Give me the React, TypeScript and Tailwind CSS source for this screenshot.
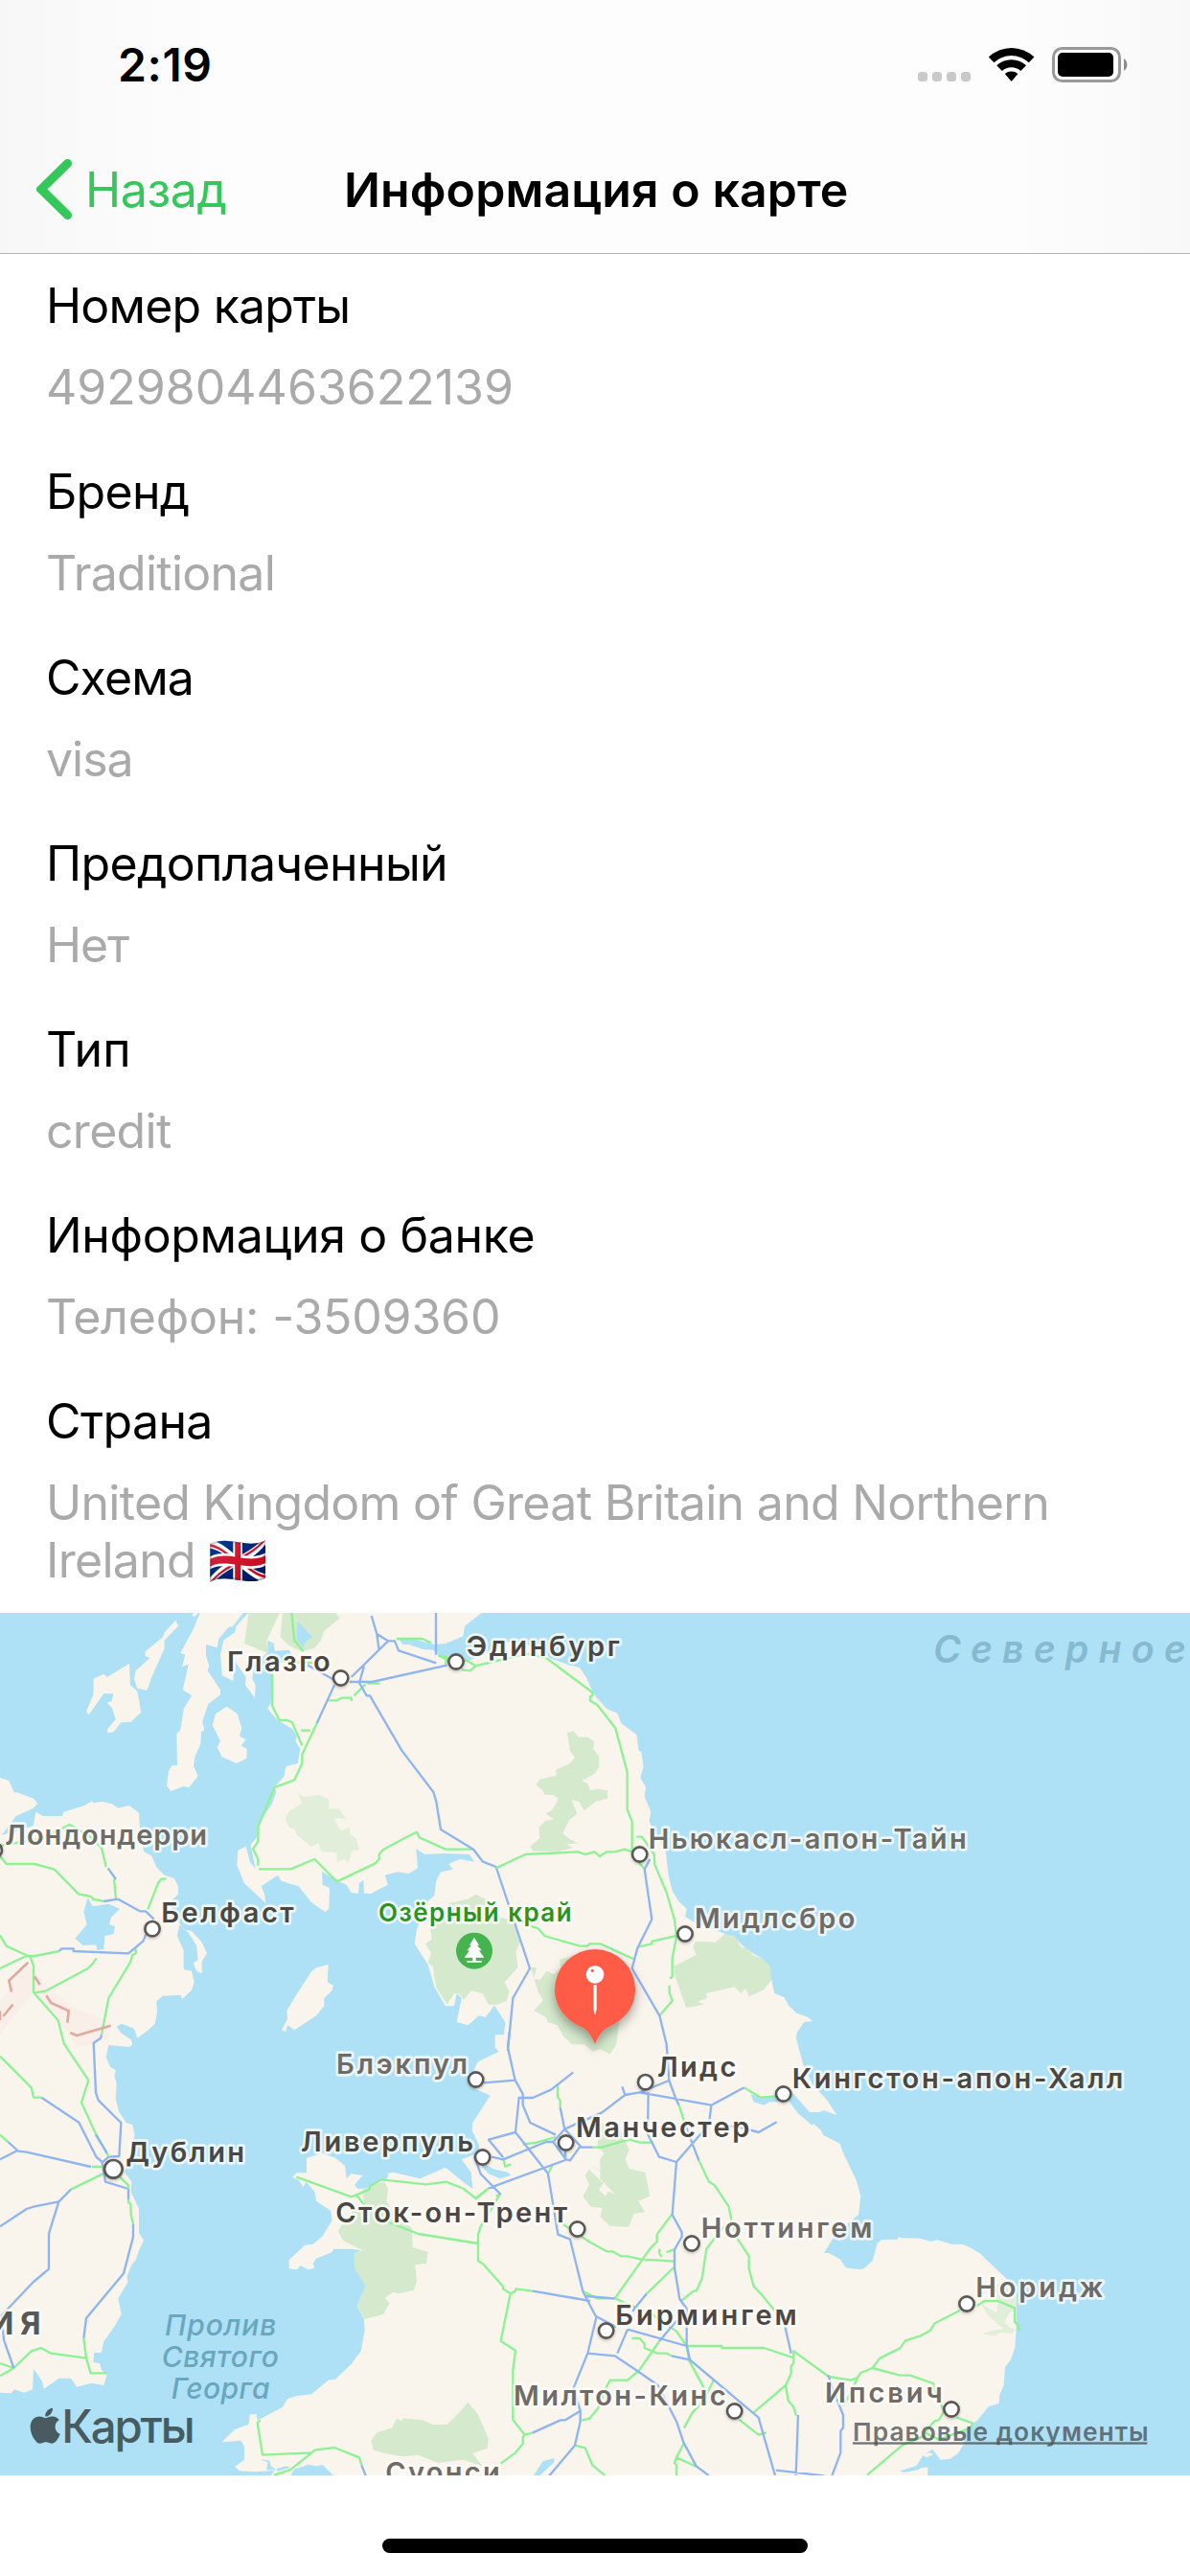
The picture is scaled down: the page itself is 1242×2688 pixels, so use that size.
import { FaApple } from "react-icons/fa";

type Row = { title: string; value: string; titleCls: string; valueCls: string };

const rows: Row[] = [
  { title: "Номер карты", value: "4929804463622139", titleCls: "tracking-[-0.8px]", valueCls: "tracking-[0px]" },
  { title: "Бренд", value: "Traditional", titleCls: "tracking-[-0.7px]", valueCls: "tracking-[-0.75px]" },
  { title: "Схема", value: "visa", titleCls: "tracking-[-0.9px]", valueCls: "tracking-[-1px]" },
  { title: "Предоплаченный", value: "Нет", titleCls: "tracking-[-0.65px]", valueCls: "tracking-[-1.1px]" },
  { title: "Тип", value: "credit", titleCls: "tracking-[0.1px]", valueCls: "tracking-[-0.7px]" },
  { title: "Информация о банке", value: "Телефон: -3509360", titleCls: "tracking-[-0.35px]", valueCls: "tracking-[-0.2px]" },
  {
    title: "Страна",
    value: "United Kingdom of Great Britain and Northern Ireland 🇬🇧",
    titleCls: "tracking-[-0.6px]",
    valueCls: "tracking-[-0.71px]",
  },
];

const LAND = "#f9f5ed";
const SEA = "#aee1f5";
const PARK = "#d5e9cd";

const land: string[] = [
  // Great Britain
  "M785,0 L740,50 735,70 700,95 690,140 695,205 730,222 735,160 770,210 768,235 798,275 800,235 790,215 797,170 838,132 838,95 858,105 860,128 905,125 920,150 850,175 852,240 848,290 838,310 870,345 915,372 930,395 925,410 940,435 932,480 895,490 890,520 860,555 865,570 850,610 808,670 805,710 785,735 800,810 783,790 770,740 745,752 742,800 765,855 832,918 828,890 818,865 870,830 880,848 935,865 975,915 1018,945 1030,935 1032,870 1010,860 1008,818 1060,850 1085,860 1100,885 1122,887 1125,855 1138,845 1140,887 1162,888 1185,875 1215,860 1205,830 1245,820 1280,825 1308,808 1303,748 1330,765 1390,762 1470,765 1485,788 1440,780 1405,795 1418,812 1380,820 1365,850 1360,895 1335,915 1305,1000 1298,1045 1340,1110 1360,1180 1395,1240 1422,1240 1430,1200 1445,1215 1430,1290 1465,1300 1500,1270 1520,1275 1548,1238 1582,1290 1578,1330 1550,1330 1550,1370 1562,1382 1495,1415 1485,1440 1490,1500 1535,1520 1480,1605 1478,1630 1500,1675 1500,1700 1520,1735 1545,1750 1590,1760 1600,1770 1565,1780 1530,1765 1505,1738 1485,1705 1445,1720 1475,1760 1480,1812 1450,1790 1395,1745 1315,1780 1230,1760 1210,1765 1258,1780 1240,1765 1218,1765 1212,1780 1195,1785 1160,1810 1120,1812 1110,1800 1135,1770 1100,1765 1085,1780 1080,1740 1050,1715 1010,1700 960,1715 960,1762 930,1762 915,1775 935,1785 950,1806 958,1790 985,1820 990,1850 1035,1880 1040,1910 1010,1960 980,1985 955,1988 905,2035 905,2062 930,2065 940,2052 965,2065 985,2060 980,2045 990,2030 1040,2010 1045,2000 1100,2000 1130,2005 1110,2015 1115,2060 1145,2115 1118,2180 1140,2220 1142,2255 1130,2320 1100,2360 1050,2408 1030,2410 975,2455 930,2460 900,2470 885,2495 820,2530 805,2535 803,2518 783,2518 778,2550 735,2565 695,2605 755,2600 765,2620 765,2660 735,2682 750,2695 800,2698 860,2694 840,2720 L2905,2720 2905,2684 2885,2684 2875,2692 2830,2700 2818,2695 2870,2678 2890,2646 2920,2627 2945,2660 2975,2657 3000,2640 3020,2608 3015,2570 3060,2537 3095,2494 3128,2483 3130,2456 3143,2426 3147,2369 3165,2347 3178,2309 3182,2244 3182,2151 3150,2092 3080,2026 3070,2015 3040,1997 3015,1986 2980,1985 2935,1972 2915,1977 2880,1967 2820,1966 2815,1961 2810,1970 2760,1972 2747,1983 2732,2037 2705,2062 2690,2064 2648,2059 2630,2032 2595,2013 2580,2013 2605,1972 2655,1920 2688,1893 2695,1836 2682,1787 2638,1695 2630,1670 2578,1644 2570,1628 2548,1608 2543,1613 2498,1575 2470,1537 2440,1540 2410,1540 2392,1550 2360,1540 2350,1515 2380,1525 2430,1520 2480,1510 2535,1572 2565,1572 2580,1567 2620,1581 2588,1532 2545,1488 2515,1423 2503,1380 2493,1340 2495,1323 2518,1290 2545,1287 2530,1275 2495,1262 2470,1240 2455,1212 2425,1200 2415,1155 2385,1090 2340,1065 2300,1025 2260,1010 2175,978 2145,960 2150,935 2125,912 2105,880 2093,830 2085,760 2040,680 2033,660 2038,630 2018,585 2022,555 2005,525 2015,490 2008,445 2000,440 1993,390 1945,355 1933,323 1900,310 1860,265 1835,210 1815,180 1780,172 1720,150 1690,110 1650,90 1590,92 1550,120 1500,148 1465,158 1425,140 1380,147 1355,125 1325,123 1280,108 1262,108 1245,88 1300,92 1360,108 1395,105 1450,82 1455,50 1520,0 Z",
  // Kintyre and the western islands
  "M630,0 L605,60 565,135 580,140 570,178 590,170 572,250 600,268 575,310 565,375 553,388 555,487 538,487 528,505 522,550 535,567 575,552 592,556 620,520 606,488 610,460 628,420 630,380 640,378 634,348 652,295 690,265 690,250 650,190 655,175 645,145 645,108 680,118 685,90 715,55 730,50 768,0Z",
  "M710,302 L675,325 665,360 690,410 680,430 695,460 740,480 772,465 773,435 755,425 770,405 750,395 757,370 743,325Z",
  "M405,168 L335,210 325,200 293,215 292,265 270,318 278,328 325,262 355,262 350,285 335,290 350,305 362,342 335,375 338,385 355,382 380,352 410,350 442,320 430,255 408,235Z",
  "M550,32 L515,70 510,85 455,130 455,145 470,150 425,190 420,215 430,245 460,252 475,210 515,120 515,95 558,50Z",
  "M615,5 L600,15 608,22 622,9Z",
  // Isle of Man
  "M1028,1110 L990,1120 975,1132 925,1210 898,1255 900,1280 882,1315 895,1320 900,1300 922,1315 990,1270 1015,1240 1015,1215 1040,1190 1043,1175 1025,1165Z",
  // Ireland
  "M0,525 L28,535 45,572 52,570 105,590 118,605 105,620 50,645 5,705 60,690 105,675 112,632 135,645 195,645 200,632 265,612 288,598 293,604 320,600 350,607 370,620 405,612 435,635 438,690 450,755 475,770 490,805 515,830 545,840 558,865 558,890 530,915 550,960 575,1000 600,1005 632,1040 648,1075 632,1100 632,1138 615,1130 605,1105 620,1095 615,1050 590,1010 562,985 555,1020 575,1065 575,1125 600,1130 608,1165 600,1190 570,1218 565,1205 510,1208 490,1225 492,1260 485,1295 465,1315 430,1340 420,1310 380,1295 365,1305 380,1325 410,1345 415,1360 405,1368 340,1362 332,1400 345,1430 362,1440 358,1460 365,1480 362,1530 372,1570 395,1605 415,1612 422,1645 405,1700 390,1760 412,1790 410,1820 435,1875 435,1950 450,1973 435,2005 425,2035 412,2050 398,2085 400,2105 370,2155 380,2205 360,2240 325,2290 317,2325 295,2325 292,2355 312,2358 318,2380 335,2392 325,2427 285,2420 240,2432 222,2405 185,2405 137,2438 132,2415 105,2375 102,2440 75,2450 45,2440 35,2452 0,2450Z",
];

const water: string[] = [
  "M275,900 L262,945 272,985 235,1028 260,1050 300,1048 305,1065 325,1062 328,1020 355,1015 360,990 342,985 348,962 375,935 340,920 290,928Z",
  "M932,35 L928,92 950,118 958,98 978,85Z",
  "M910,2710 L920,2690 965,2675 990,2680 1010,2676 1045,2710Z",
  "M835,2660 L815,2660 838,2668 835,2692 865,2692 848,2680 845,2665Z",
  "M865,2688 L895,2680 910,2685 870,2696Z",
  "M1735,2655 L1700,2665 1670,2710 1690,2710 1735,2668Z",
  "M1720,110 L1700,92 1530,92 1590,100 1650,110Z",
];

const parks: string[] = [
  "M780,0 L765,105 838,135 835,95 880,0Z M885,0 L878,85 905,112 945,130 985,120 1005,95 1015,65 1065,25 1040,0Z",
  "M1780,385 L1775,380 1785,440 1800,462 1785,480 1740,500 1742,518 1690,530 1678,548 1700,565 1705,578 1735,580 1748,592 1730,625 1710,638 1735,655 1708,660 1688,680 1690,715 1660,740 1670,755 1750,755 1795,745 1775,733 1810,730 1780,715 1762,700 1782,658 1807,638 1790,595 1812,600 1830,628 1865,600 1902,590 1902,565 1870,560 1848,565 1840,542 1822,535 1862,512 1876,490 1876,458 1858,435 1860,412 1840,398 1812,398 1795,378Z",
  "M1490,890 L1465,905 1405,918 1390,965 1345,975 1352,1030 1332,1045 1350,1075 1340,1105 1355,1115 1365,1180 1400,1235 1422,1200 1437,1200 1452,1220 1475,1192 1510,1200 1530,1235 1555,1235 1585,1225 1595,1195 1580,1165 1622,1118 1615,1070 1628,1040 1612,975 1560,960 1530,910Z",
  "M2268,1015 L2240,1040 2178,1037 2170,1055 2180,1080 2110,1115 2112,1140 2148,1245 2205,1235 2185,1225 2215,1215 2210,1200 2300,1180 2320,1200 2335,1185 2345,1210 2390,1190 2415,1158 2412,1115 2385,1090 2355,1080 2350,1065 2320,1055 2300,1020Z",
  "M1662,1120 L1680,1118 1672,1155 1692,1158 1710,1130 1735,1140 1755,1120 1752,1095 1800,1080 1950,1200 1930,1360 1910,1390 1880,1375 1855,1382 1830,1360 1790,1360 1765,1335 1745,1300 1715,1290 1710,1275 1672,1255 1700,1222 1685,1195Z",
  "M1880,1605 L1870,1680 1892,1700 1878,1720 1880,1755 1850,1740 1832,1770 1845,1800 1825,1835 1850,1868 1885,1872 1880,1900 1910,1928 1968,1932 1985,1890 2020,1885 1998,1850 2035,1835 2020,1760 1970,1750 1958,1720 1970,1690 1940,1620Z",
  "M1205,1790 L1215,1815 1210,1850 1240,1900 1290,1935 1292,1995 1340,2010 1335,2045 1300,2050 1305,2100 1295,2130 1248,2140 1230,2135 1205,2155 1220,2170 1200,2205 1142,2220 1118,2180 1145,2115 1110,2060 1108,2015 1135,2005 1075,1975 1058,1945 1080,1910 1105,1880 1140,1860 1135,1815 1165,1800Z",
  "M1242,2530 L1260,2540 1260,2530 1320,2535 1355,2550 1400,2550 1420,2530 1440,2510 1465,2480 1495,2515 1530,2595 1525,2625 1480,2640 1510,2680 1450,2660 1370,2670 1310,2645 1260,2650 1205,2640 1170,2630 1162,2600 1180,2575 1228,2560Z",
];

const lightParks: string[] = [
  "M932,570 L950,585 1000,580 1030,592 1030,622 1060,622 1085,655 1045,650 1060,680 1070,690 1095,680 1095,700 1115,715 1125,750 1100,755 1090,795 1080,780 1055,790 1055,760 1005,755 998,730 975,742 930,705 920,685 905,680 893,655 905,630 945,605Z",
  "M3095,2075 L3100,2100 3080,2140 3140,2100 3165,2098 3182,2140 3182,2190 3160,2200 3145,2228 3160,2245 3178,2252 3170,2265 3130,2262 3115,2272 3072,2266 3110,2255 3142,2250 3090,2205 3070,2170 3120,2200 3125,2165Z",
];

// Each tile keeps its own origin inside the 3726×2700 map space.
const tiles: { x: number; y: number; green: string; blue: string }[] = [
  {
    x: 0,
    y: 0,
    green:
      "M912,0 L922,95 950,130 M852,200 V300 L875,345 900,345 915,352 946,425 M992,355 L946,452 946,480 922,532 860,555 808,678 V725 L792,748 808,780 V800 M810,811 H910 L985,780 1055,850 1175,793 1187,780 V765 L1200,750 1260,718 1305,695 1313,712 1395,749 1482,749 M1028,283 H1055 L1070,275 1100,275 1102,285 M1108,268 L1145,232 M1150,230 H1190 M942,377 H972 M0,770 L20,795 H108 L170,812 246,889 285,897 292,905 325,912 M0,738 L130,715 218,672 290,715 318,745 332,805 M357,842 L363,905 M463,937 L495,855 505,842 H521 M0,1018 L20,1052 95,1086 105,1115 V1197 L182,1285 200,1357 277,1472 255,1542 302,1645 M0,1122 L82,1083 110,1083 185,1068 M105,1199 L145,1192 275,1122 292,1105 302,1090 M425,1060 V1075 L415,1080 408,1102 340,1215 318,1330 M870,160 L980,165 M1242,90 H1322 L1350,103 M1375,143 L1400,155",
    blue:
      "M1163,18 L1180,75 1187,128 M1180,75 L1215,97 H1236 L1248,127 1366,166 M1365,0 V140 M1215,97 L1100,210 M1140,175 L1125,228 1148,268 1158,268 1258,440 1357,570 1366,600 1380,687 1482,749 1512,788 1553,804 1595,930 1659,1122 1606,1215 1590,1380 M962,172 L1045,218 M1047,235 L992,355 M1095,225 H1165 L1400,173 M338,808 L363,843 M325,912 L370,905 438,943 H456 L482,968 M457,1015 L448,1037 402,1075 230,1068 230,1060 H193 L185,1068 M318,1330 L315,1340 293,1355 300,1510 308,1535 379,1605 373,1710 340,1712 320,1730 330,1790 402,1812 V1845",
  },
  {
    x: 1200,
    y: 0,
    green:
      "M172,143 L265,160 288,175 450,137 510,150 655,258 655,268 648,270 648,284 670,297 727,370 764,508 V625 L779,662 V755 M793,710 H810 L848,765 850,797 888,887 912,970 918,1022 905,1090 V1150 L897,1152 M896,1175 V1198 L905,1223 865,1270 M918,1020 L842,1037 840,1045 798,1055 M245,187 L272,190 290,175 M195,170 L200,145 M353,808 L445,765 610,757 632,765 662,757 678,771 700,757 H725 L756,749 800,765 M800,790 L818,810 M460,988 L485,997 505,1020 615,1052 H640 L645,1045 H680 L783,1092",
    blue: "M835,780 L818,812 841,968 796,1058 779,1122 865,1270 887,1360 895,1475",
  },
  {
    x: 0,
    y: 1320,
    green:
      "M0,77 L98,175 105,206 H130 M0,323 L25,345 M288,423 H320 M322,445 L222,494 M375,455 L403,482 402,492 M402,525 V535 L409,540 410,572 417,602 M262,960 L270,1022 284,1069 H335 M270,1022 L160,1007 128,990 98,1000 43,1053 0,1078 M0,1038 L43,1053 M302,323 L340,390 M928,455 L1100,517 1155,495 1160,482 1195,463 1335,478 1397,470 1452,492 1490,522 1527,492 M1117,512 L1140,542 1200,590 1310,633 1497,663 M815,1215 L806,1225 822,1325 975,1318 985,1310 1047,1302 1125,1333 1132,1357 M980,1315 L908,1372 858,1388",
    blue:
      "M130,206 L247,284 302,393 320,408 M300,323 L335,380 M0,400 L55,372 25,345 M55,374 L83,377 285,423 M222,494 L184,532 105,548 83,555 0,610 M184,532 L153,632 V743 L105,783 5,888 12,965 43,1053 M417,602 V642 L387,757 270,897 262,960 M1132,1357 L1147,1395",
  },
  {
    x: 1200,
    y: 1320,
    green:
      "M546,168 V205 L554,215 V237 M437,353 L480,347 540,330 M655,362 H685 L770,337 803,347 H845 M926,230 L945,290 M975,350 M988,403 L1020,470 1037,480 1082,548 1090,590 1110,650 1145,703 V742 L1160,797 1182,820 1225,872 M1065,610 L1012,680 998,773 980,812 972,812 932,843 M375,395 L382,422 400,415 M530,417 L516,445 M570,375 V400 M903,573 L857,635 V657 L835,680 725,835 M563,603 L645,658 700,688 H717 L745,703 H765 L805,712 910,719 M865,680 V695 L872,705 M887,690 L910,682 M910,738 L825,820 M625,813 L670,835 H725 L850,890 M353,515 L365,510 305,610 297,635 V718 L312,727 375,797 V805 L398,820 414,812 415,805 468,812 M398,820 L368,968 414,998 406,1060 V1215 L443,1262 467,1256 M443,1262 L437,1270 V1290 L414,1318 368,1352 M778,960 H803 L818,977 V990 L858,1007 H888 L903,1015 M850,890 L918,938 950,984 H1060 L1060,990 H1192 L1285,1021 M950,984 L958,1030 1005,1117 M865,968 L850,990 800,1062 765,1091 H710 L700,1110 672,1180 647,1210 622,1217 M1035,1090 L1015,1130 990,1170 968,1192 942,1240 M1115,1215 L1175,1262 1200,1255 M600,1295 L632,1303 655,1357 695,1390 M942,1287 L918,1333 912,1350 918,1357 V1390 M918,1333 L988,1365 M1285,998 V1037 L1277,1047 V1070 L1260,1107 1160,1192 M1260,1107 L1268,1155 1285,1175 1293,1202 M1130,175 L1182,206 1228,202 M290,522 L330,490",
    blue:
      "M395,0 L390,50 413,152 437,195 V230 L460,285 540,323 M315,160 L413,152 M595,127 L525,182 468,207 H425 L414,315 330,338 375,393 M414,315 L516,445 547,635 585,650 625,813 665,890 730,925 M554,237 L568,305 617,358 585,403 572,400 532,345 568,305 685,253 757,198 803,190 895,153 M748,172 L757,198 M660,265 L600,290 M830,190 L828,320 864,392 918,408 1020,290 1027,230 803,190 M895,153 L918,215 926,230 M1027,230 L1130,175 M1080,295 L1120,300 1175,315 1232,283 M945,290 L988,403 M918,408 L905,573 935,628 V642 L912,682 V738 L928,837 950,867 V980 L960,1027 1175,1208 1227,1390 M617,362 H655 M340,392 L375,400 510,345 H535 M285,390 L305,445 368,510 M330,490 L570,402 V375 M468,812 L648,843 M635,828 L725,835 M765,932 L733,1007 M780,875 L825,820 M765,932 L950,984 M918,905 L865,968 M668,890 L640,1007 725,1015 800,1065 860,1107 918,1220 940,1285 980,1360 1020,1390 M640,1007 L595,1117 617,1187 V1220 L600,1295 520,1390 M617,1187 L570,1216 H555 L467,1256 M903,1015 L960,1027 M1255,910 L1277,1007 M1299,1200 L1292,1390 M1230,1373 L1380,1390",
  },
  {
    x: 2460,
    y: 1320,
    green:
      "M22,998 L135,1080 205,1091 225,1083 235,1068 272,1053 295,1022 358,991 375,967 420,953 452,936 467,913 545,873 M600,858 L622,843 H665 L717,865 V910 L725,915 733,938 M272,1053 L358,1076 H390 L462,1101 465,1120 490,1175 495,1190 480,1215 465,1220 435,1255 480,1277 M225,1083 L205,1130 180,1170 M535,1208 L585,1225 580,1240 480,1277 M435,1265 L365,1295 255,1388",
    blue: "M133,1075 L160,1150 180,1200 V1240 L172,1250 V1318 L145,1390",
  },
];

const DARK = "#4b4843";
const GRAY = "#6f6b66";

type Label = { t: string; x: number; y: number; w: number; c: string };
const cities: Label[] = [
  { t: "Глазго", x: 711, y: 193, w: 323, c: DARK },
  { t: "Эдинбург", x: 1460, y: 143, w: 480, c: DARK },
  { t: "Лондондерри", x: 16, y: 735, w: 632, c: GRAY },
  { t: "Белфаст", x: 505, y: 978, w: 415, c: DARK },
  { t: "Ньюкасл-апон-Тайн", x: 2030, y: 747, w: 996, c: GRAY },
  { t: "Мидлсбро", x: 2175, y: 995, w: 502, c: GRAY },
  { t: "Блэкпул", x: 1053, y: 1453, w: 411, c: GRAY },
  { t: "Лидс", x: 2058, y: 1460, w: 247, c: DARK },
  { t: "Кингстон-апон-Халл", x: 2480, y: 1496, w: 1037, c: DARK },
  { t: "Манчестер", x: 1803, y: 1651, w: 544, c: DARK },
  { t: "Ливерпуль", x: 942, y: 1694, w: 540, c: DARK },
  { t: "Дублин", x: 394, y: 1729, w: 371, c: DARK },
  { t: "Сток-он-Трент", x: 1051, y: 1918, w: 725, c: DARK },
  { t: "Ноттингем", x: 2195, y: 1965, w: 536, c: GRAY },
  { t: "Норидж", x: 3055, y: 2151, w: 399, c: GRAY },
  { t: "Бирмингем", x: 1927, y: 2237, w: 568, c: DARK },
  { t: "Милтон-Кинс", x: 1608, y: 2489, w: 665, c: GRAY },
  { t: "Ипсвич", x: 2583, y: 2481, w: 368, c: GRAY },
  { t: "Суонси", x: 1207, y: 2730, w: 358, c: GRAY },
];

const markers: [number, number, number][] = [
  [1067, 213, 23], [1428, 162, 23], [477, 998, 23], [-17, 752, 23], [2003, 765, 23], [2145, 1014, 23],
  [1490, 1470, 23], [2021, 1478, 23], [2453, 1515, 23], [1772, 1668, 23], [1511, 1713, 23], [355, 1750, 28],
  [1808, 1938, 23], [2166, 1983, 23], [3027, 2172, 23], [1898, 2256, 23], [2300, 2508, 23], [2979, 2502, 23],
];

function MapView() {
  return (
    <svg viewBox="0 9 3726 2700" className="block h-[900px] w-full font-[Inter]">
      <defs>
        <filter id="soft" x="-30%" y="-30%" width="160%" height="160%">
          <feDropShadow dx="0" dy="16" stdDeviation="18" floodColor="#000" floodOpacity="0.35" />
        </filter>
        <filter id="dot" x="-30%" y="-30%" width="160%" height="170%">
          <feDropShadow dx="0" dy="4" stdDeviation="4" floodColor="#000" floodOpacity="0.25" />
        </filter>
      </defs>
      <rect width="3726" height="2720" fill={SEA} />
      {land.map((d) => <path key={d} d={d} fill={LAND} />)}
      {parks.map((d) => <path key={d} d={d} fill={PARK} />)}
      {lightParks.map((d) => <path key={d} d={d} fill="#e1efda" />)}
      {water.map((d) => <path key={d} d={d} fill={SEA} />)}
      <path d="M1838,1745 L1850,1740 1880,1758 1878,1780 1892,1795 1925,1828 1905,1820 1895,1835 1875,1815 1890,1795Z" fill={LAND} />
      <path d="M2888,2645 l20,-7 15,5 -22,10Z" fill={LAND} />
      <path d="M0,1230 L85,1105 130,1160 220,1240 345,1290 340,1345 240,1370 190,1290 110,1190 60,1250 0,1330Z" fill="#f9efe8" />
      {tiles.map((t) => (
        <g key={`${t.x}-${t.y}`} transform={`translate(${t.x} ${t.y})`} fill="none" strokeWidth="7" strokeLinejoin="round">
          <path d={t.green} stroke="#8cf294" />
          <path d={t.blue} stroke="#8fb4f2" />
        </g>
      ))}
      <path
        d="M88,1103 L28,1160 36,1195 M108,1147 L125,1173 M145,1207 L160,1230 215,1255 211,1292 M220,1323 L240,1332 347,1301 M40,1235 L10,1272 M0,1255 V1285"
        fill="none"
        stroke="#dfaba1"
        strokeWidth="8"
      />

      {markers.map(([x, y, r]) => (
        <circle key={`${x}-${y}`} cx={x} cy={y} r={r} fill="#fff" stroke="#5c5955" strokeWidth="8" filter="url(#dot)" />
      ))}

      <g fontSize="87" fontWeight="560" stroke="#fdfcfa" strokeOpacity="0.8" strokeWidth="16" strokeLinejoin="round" paintOrder="stroke">
        {cities.map((l) => (
          <text key={l.t} x={l.x} y={l.y} textLength={l.w} fill={l.c}>{l.t}</text>
        ))}
        <text x="1185" y="974" textLength="605" fontSize="78" fill="#2b931f">Озёрный край</text>
        <text x="148" y="2267" textAnchor="end" letterSpacing="20" fontSize="99" fontWeight="700" fill="#5a5856">ИЯ</text>
      </g>

      <g fontStyle="italic" fontWeight="500" fill="#69a7bf">
        <text x="516" y="2270" fontSize="90" textLength="349">Пролив</text>
        <text x="506" y="2370" fontSize="90" textLength="367">Святого</text>
        <text x="536" y="2469" fontSize="90" textLength="309">Георга</text>
        <text x="2922" y="165" fontSize="118" textLength="791" fontWeight="560" fill="#86bad1">Северное</text>
      </g>

      <circle cx="1485" cy="1067" r="57" fill="#45b44f" />
      <path
        d="M1485,1025 L1500,1049 H1494 L1508,1066 H1500 L1516,1088 H1490 V1098 H1508 V1103 H1462 V1098 H1480 V1088 H1454 L1470,1066 H1462 L1476,1049 H1470Z"
        fill="#fff"
      />

      <path
        d="M1863,1062 a126,126 0 0 1 126,126 c0,56 -36,96 -84,118 c-20,9 -31,29 -42,53 c-11,-24 -22,-44 -42,-53 c-48,-22 -84,-62 -84,-118 a126,126 0 0 1 126,-126Z"
        fill="#ff5c47"
        filter="url(#soft)"
      />
      <circle cx="1863" cy="1141" r="28" fill="#fff" />
      <circle cx="1855" cy="1129" r="5" fill="#ff5c47" />
      <path d="M1858,1173 H1868 V1250 L1863,1268 1858,1250Z" fill="#fff" />

      <FaApple x={78} y={2490} size={127} color="#485b61" />
      <text x="193" y="2607" fontSize="142" fontWeight="500" textLength="418" fill="#485b61">Карты</text>
      <g fill="#4c5458" fillOpacity="0.8">
        <text x="2670" y="2600" fontSize="79" fontWeight="560" textLength="926">Правовые документы</text>
        <rect x="2670" y="2605" width="922" height="7" />
      </g>
    </svg>
  );
}

function StatusIcons() {
  return (
    <svg viewBox="0 0 230 50" className="ml-auto h-[50px] w-[230px]">
      {[0, 15, 30, 45].map((x) => <rect key={x} x={x + 1} y="31" width="10" height="10" rx="3.5" fill="#c9c9c9" />)}
      <path d="M74.8,15.6 a34,34 0 0 1 47.6,0 l-5.6,5.7 a26.5,26.5 0 0 0 -36.4,0Z" />
      <path d="M83.2,24.3 a22.5,22.5 0 0 1 30.8,0 l-5.7,5.6 a14.5,14.5 0 0 0 -19.4,0Z" />
      <path d="M91.8,33 a10.6,10.6 0 0 1 13.6,0 l-6.8,8Z" />
      <rect x="142.5" y="6.5" width="69" height="34" rx="9" fill="#fff" stroke="#999" strokeWidth="3" />
      <rect x="147" y="11" width="58" height="25" rx="5" />
      <path d="M216,17 a8,8 0 0 1 0,13Z" fill="#8c8c8c" />
    </svg>
  );
}

export default function App() {
  return (
    <div className="flex h-[2688px] w-[1242px] flex-col overflow-hidden bg-white font-[Inter,sans-serif] text-[50px] leading-[60px] text-black">
      <header className="flex h-[265px] flex-col border-b-[1.5px] border-[#b2b2b2] bg-[linear-gradient(90deg,#f7f7f7,#fbfbfb_12%,#fdfdfd_20%,#fdfdfd_84%,#fbfbfb_90%,#f8f8f8)]">
        <div className="flex h-[132px] pt-[44px] pr-[55px] pl-[123px]">
          <span className="text-[48px] leading-[48px] font-semibold tracking-[0.6px]">2:19</span>
          <StatusIcons />
        </div>
        <div className="grid grid-cols-[363px_520px_1fr] items-center pt-[34px]">
          <div className="flex items-center pl-[38px] text-[#34c759]">
            <svg viewBox="0 0 38 64" className="h-[64px] w-[38px]">
              <path d="M32.5,4.5 L5,31.5 32.5,58.5" fill="none" stroke="currentColor" strokeWidth="9" strokeLinecap="round" />
            </svg>
            <span className="ml-[13px] tracking-[-0.4px]">Назад</span>
          </div>
          <h1 className="-ml-[4px] font-semibold tracking-[0.1px] whitespace-nowrap">Информация о карте</h1>
        </div>
      </header>

      <main className="flex h-[1418px] flex-col gap-[49px] px-[48px] pt-[24px]">
        {rows.map((r) => (
          <section key={r.title} className="flex flex-col gap-[25px]">
            <h2 className={r.titleCls}>{r.title}</h2>
            <p className={`text-[#aaaaaa] ${r.valueCls}`}>{r.value}</p>
          </section>
        ))}
      </main>

      <MapView />

      <footer className="flex flex-1 items-end justify-center pb-[24px]">
        <div className="h-[15px] w-[444px] rounded-full bg-black" />
      </footer>
    </div>
  );
}
